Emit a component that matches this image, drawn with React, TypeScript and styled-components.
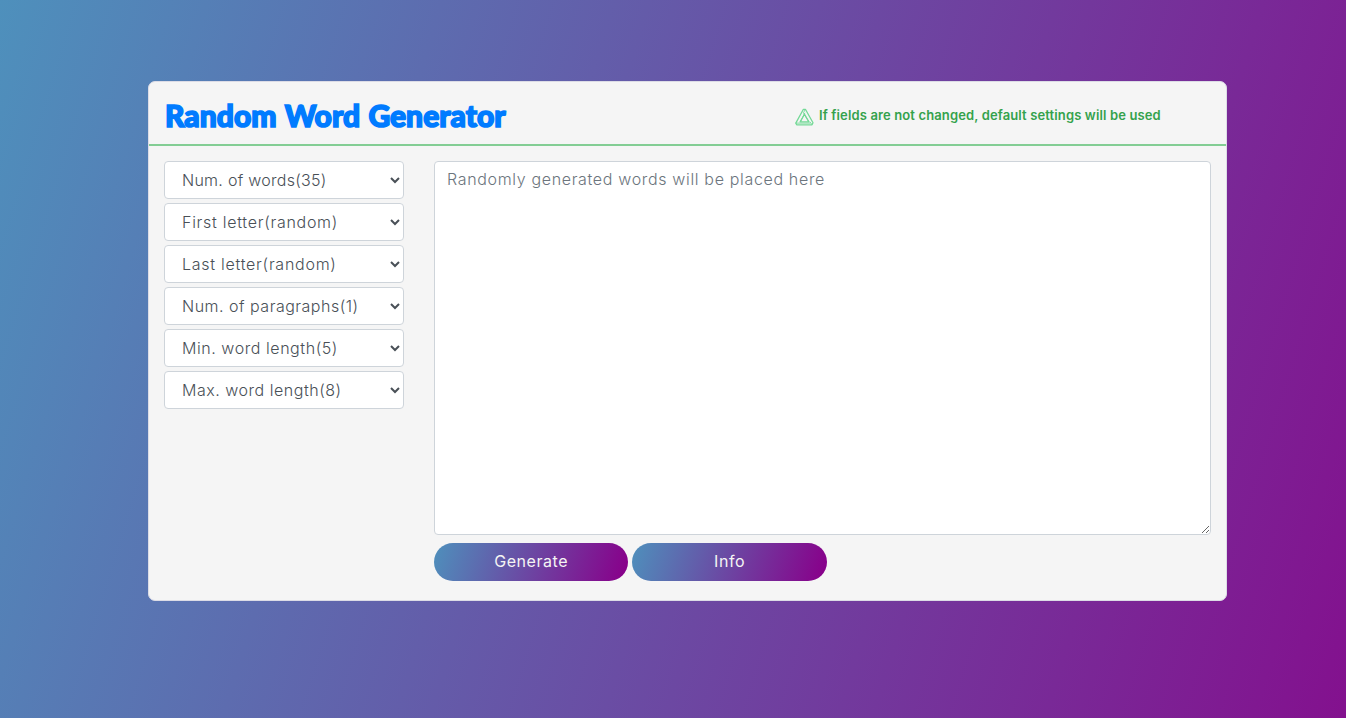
import React from "react";
import styled, { createGlobalStyle } from "styled-components";

const GlobalStyle = createGlobalStyle`
  *, *::before, *::after { box-sizing: border-box; }
  body {
    margin: 0;
    min-height: 100vh;
    font-family: Inter, "Liberation Sans", sans-serif;
    font-size: 16px;
    line-height: 24px;
  }
`;

const Page = styled.main`
  height: 100vh;
  overflow: hidden;
  padding: 81px 119px 0 148px;
  background: linear-gradient(107deg, #4e90bc 0%, #88058a 109%);
`;

const Card = styled.section`
  height: 520px;
  background: #f5f5f5;
  border: 1px solid #dcdce6;
  border-radius: 7px;
  overflow: hidden;
`;

const Header = styled.header`
  display: flex;
  height: 64px;
  padding-left: 16px;
  border-bottom: 2px solid #83cd94;
`;

const Title = styled.h1`
  flex: 0 0 630px;
  margin: 15px 0 0;
  font-family: Lato, sans-serif;
  font-weight: 900;
  font-size: 30px;
  line-height: 37px;
  letter-spacing: 0.05px;
  word-spacing: 1px;
  -webkit-text-stroke: 1.6px #007bff;
  color: #007bff;
  white-space: nowrap;
`;

const Notice = styled.p`
  display: flex;
  align-items: flex-start;
  gap: 5px;
  margin: 23px 0 0;
  color: #34a24c;
  font-size: 13px;
  font-weight: 600;
  line-height: 20px;
  white-space: nowrap;
`;

const NoticeText = styled.span`
  letter-spacing: 0.13px;
`;

const WarningMark = styled.svg`
  width: 19px;
  height: 18px;
  margin-top: 3px;
`;

const Body = styled.div`
  display: flex;
  gap: 30px;
  padding: 15px 15px 0;
`;

const Options = styled.form`
  flex: 0 0 240px;
  display: flex;
  flex-direction: column;
  gap: 4px;
`;

const Select = styled.select<{ $spacing: number }>`
  width: 239.5px;
  height: 38px;
  padding: 6px 12px 6px 13px;
  border: 1px solid #ced4da;
  border-radius: 4px;
  background: #fff;
  color: #495057;
  font-family: inherit;
  font-size: 16px;
  font-weight: 300;
  line-height: 24px;
  letter-spacing: ${(p) => p.$spacing}px;
`;

const Result = styled.div`
  flex: 1;
  display: flex;
  flex-direction: column;
  gap: 8px;
`;

const Output = styled.textarea`
  display: block;
  width: 100%;
  height: 374px;
  padding: 5px 12px;
  border: 1px solid #ced4da;
  border-radius: 4px;
  background: #fff;
  font-family: inherit;
  font-size: 16px;
  font-weight: 350;
  line-height: 24px;
  letter-spacing: 0.66px;
  &::placeholder { color: #6c757d; opacity: 1; }
`;

const Actions = styled.div`
  display: flex;
  gap: 4px;
`;

const Button = styled.button`
  width: 194.4px;
  height: 38px;
  padding: 0 0 2px;
  border: 0;
  border-radius: 20px;
  background: linear-gradient(107deg, #4e90bc 0%, #88008a 98%);
  color: #f4f4f4;
  font-family: inherit;
  font-size: 16px;
  letter-spacing: 0.55px;
`;

const options = [
  { label: "Num. of words(35)", spacing: 0.27 },
  { label: "First letter(random)", spacing: 0.72 },
  { label: "Last letter(random)", spacing: 0.74 },
  { label: "Num. of paragraphs(1)", spacing: 0.5 },
  { label: "Min. word length(5)", spacing: 0.56 },
  { label: "Max. word length(8)", spacing: 0.52 },
];

export default function App() {
  return (
    <>
      <GlobalStyle />
      <Page>
        <Card>
          <Header>
            <Title>Random Word Generator</Title>
            <Notice>
              <WarningMark viewBox="0 0 19 18" fill="none" stroke="#74d997" strokeWidth="1.3" strokeLinejoin="round">
                <path d="M8.4 1.3h2L18 14.8l-1 2H1.7l-.9-1.7z" />
                <path d="M9.5 6.2l4.4 7.7H5.2z" />
                <path d="M10.4 1.3L8.4 4.8l5.5 9.1M17 16.8l-2-2.9M.8 15.1h14.5M5.2 13.9L9.9 4.9" strokeWidth="0.9" />
              </WarningMark>
              <NoticeText>If fields are not changed, default settings will be used</NoticeText>
            </Notice>
          </Header>
          <Body>
            <Options>
              {options.map((o) => (
                <Select key={o.label} $spacing={o.spacing} aria-label={o.label}>
                  <option>{o.label}</option>
                </Select>
              ))}
            </Options>
            <Result>
              <Output placeholder="Randomly generated words will be placed here" />
              <Actions>
                <Button type="button">Generate</Button>
                <Button type="button">Info</Button>
              </Actions>
            </Result>
          </Body>
        </Card>
      </Page>
    </>
  );
}
